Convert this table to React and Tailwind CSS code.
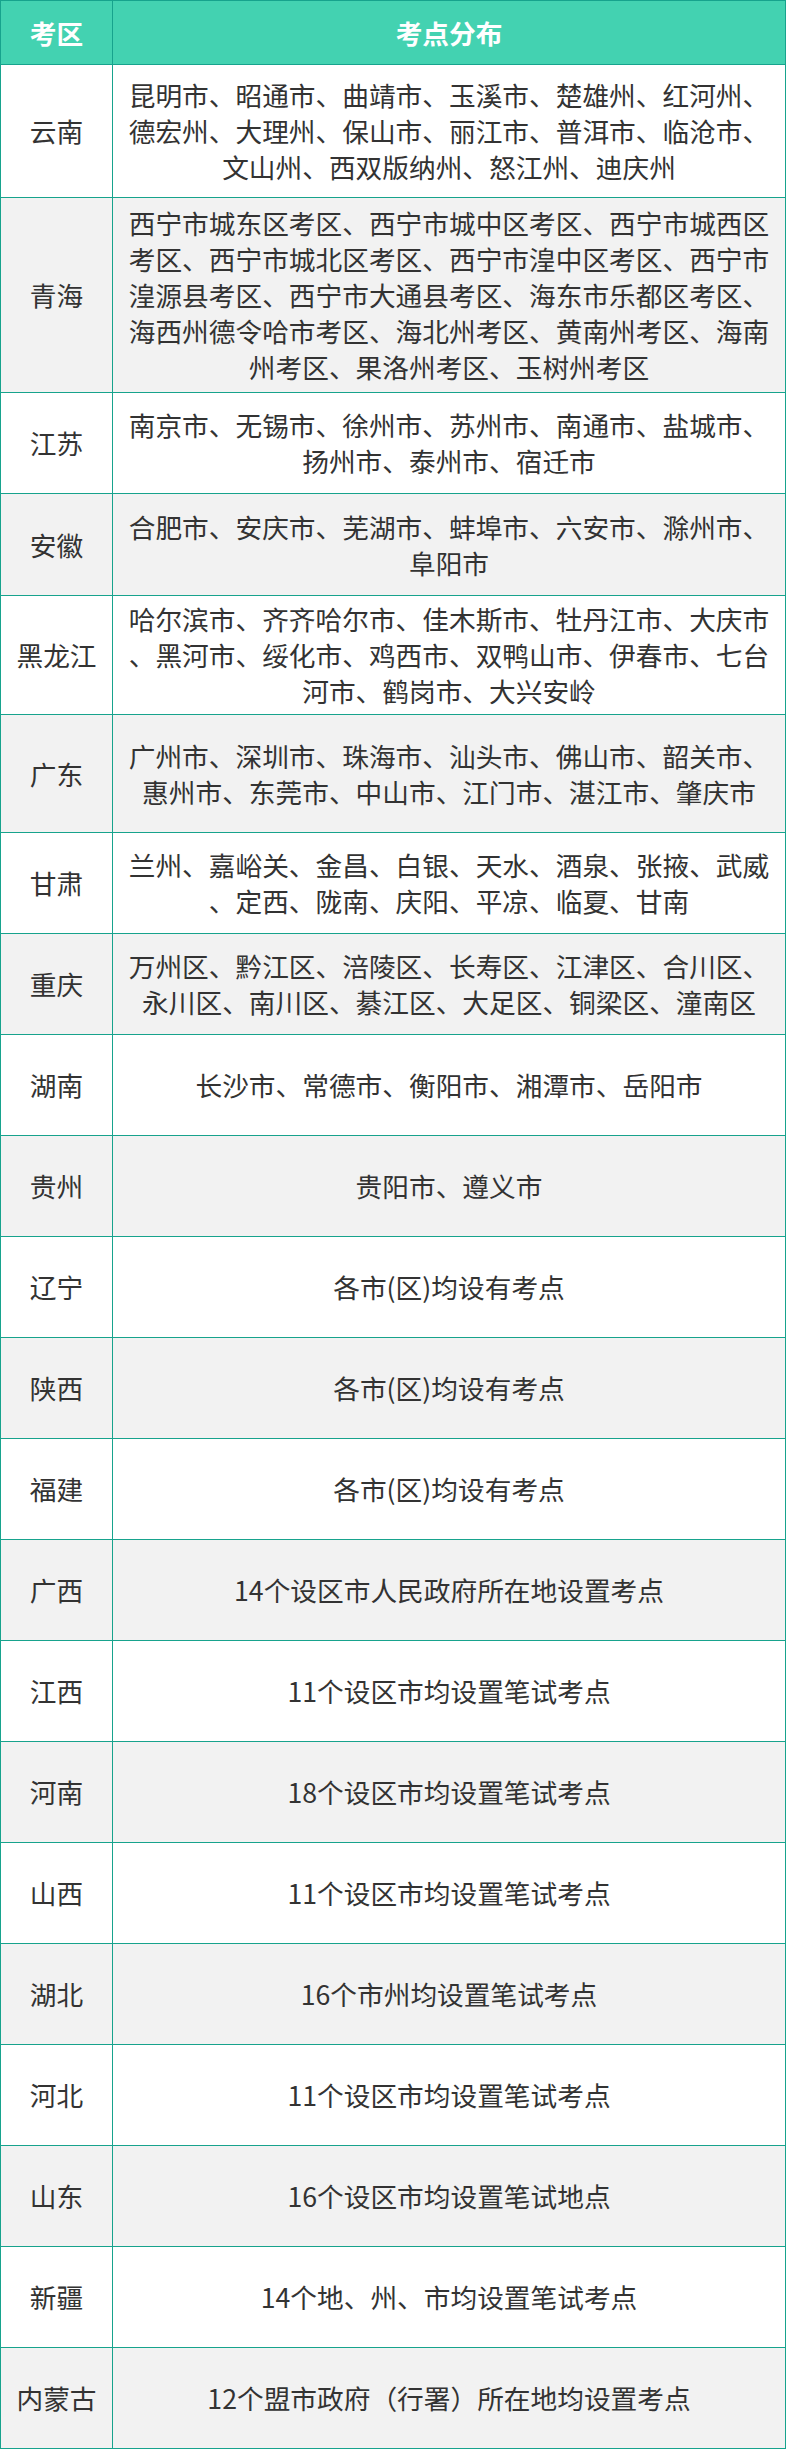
const rows = [
  {
    area: '云南',
    h: 'h-[133px]',
    lines: [
      '昆明市、昭通市、曲靖市、玉溪市、楚雄州、红河州、',
      '德宏州、大理州、保山市、丽江市、普洱市、临沧市、',
      '文山州、西双版纳州、怒江州、迪庆州',
    ],
  },
  {
    area: '青海',
    h: 'h-[195px]',
    lines: [
      '西宁市城东区考区、西宁市城中区考区、西宁市城西区',
      '考区、西宁市城北区考区、西宁市湟中区考区、西宁市',
      '湟源县考区、西宁市大通县考区、海东市乐都区考区、',
      '海西州德令哈市考区、海北州考区、黄南州考区、海南',
      '州考区、果洛州考区、玉树州考区',
    ],
  },
  {
    area: '江苏',
    h: 'h-[101px]',
    lines: ['南京市、无锡市、徐州市、苏州市、南通市、盐城市、', '扬州市、泰州市、宿迁市'],
  },
  {
    area: '安徽',
    h: 'h-[102px]',
    lines: ['合肥市、安庆市、芜湖市、蚌埠市、六安市、滁州市、', '阜阳市'],
  },
  {
    area: '黑龙江',
    h: 'h-[119px]',
    lines: [
      '哈尔滨市、齐齐哈尔市、佳木斯市、牡丹江市、大庆市',
      '、黑河市、绥化市、鸡西市、双鸭山市、伊春市、七台',
      '河市、鹤岗市、大兴安岭',
    ],
  },
  {
    area: '广东',
    h: 'h-[118px]',
    lines: ['广州市、深圳市、珠海市、汕头市、佛山市、韶关市、', '惠州市、东莞市、中山市、江门市、湛江市、肇庆市'],
  },
  {
    area: '甘肃',
    h: 'h-[101px]',
    lines: ['兰州、嘉峪关、金昌、白银、天水、酒泉、张掖、武威', '、定西、陇南、庆阳、平凉、临夏、甘南'],
  },
  {
    area: '重庆',
    h: 'h-[101px]',
    lines: ['万州区、黔江区、涪陵区、长寿区、江津区、合川区、', '永川区、南川区、綦江区、大足区、铜梁区、潼南区'],
  },
  { area: '湖南', h: 'h-[101px]', lines: ['长沙市、常德市、衡阳市、湘潭市、岳阳市'] },
  { area: '贵州', h: 'h-[101px]', lines: ['贵阳市、遵义市'] },
  { area: '辽宁', h: 'h-[101px]', lines: ['各市(区)均设有考点'] },
  { area: '陕西', h: 'h-[101px]', lines: ['各市(区)均设有考点'] },
  { area: '福建', h: 'h-[101px]', lines: ['各市(区)均设有考点'] },
  { area: '广西', h: 'h-[101px]', lines: ['14个设区市人民政府所在地设置考点'] },
  { area: '江西', h: 'h-[101px]', lines: ['11个设区市均设置笔试考点'] },
  { area: '河南', h: 'h-[101px]', lines: ['18个设区市均设置笔试考点'] },
  { area: '山西', h: 'h-[101px]', lines: ['11个设区市均设置笔试考点'] },
  { area: '湖北', h: 'h-[101px]', lines: ['16个市州均设置笔试考点'] },
  { area: '河北', h: 'h-[101px]', lines: ['11个设区市均设置笔试考点'] },
  { area: '山东', h: 'h-[101px]', lines: ['16个设区市均设置笔试地点'] },
  { area: '新疆', h: 'h-[101px]', lines: ['14个地、州、市均设置笔试考点'] },
  { area: '内蒙古', h: 'h-[101px]', lines: ['12个盟市政府（行署）所在地均设置考点'] },
]

// Exam-site table: left column is the province, right column lists the sites.
// Line breaks are fixed so the wrapping matches the source table exactly.
export default function App() {
  return (
    <div className="min-h-[2451px] w-[786px] bg-white font-['Noto_Sans_CJK_SC',sans-serif] text-[26.7px] leading-[36px] text-[#333]">
      <div className="border-x border-t border-[#17a38d]">
        {/* header */}
        <div className="flex h-[64px] border-b border-[#17a38d] bg-[#43d2b1] font-bold text-white">
          <div className="flex w-[112px] shrink-0 items-center justify-center border-r border-[#17a38d]">
            考区
          </div>
          <div className="flex flex-1 items-center justify-center">考点分布</div>
        </div>

        {rows.map((row, i) => (
          <div
            key={row.area}
            className={
              'flex border-b border-[#17a38d] ' +
              row.h +
              (i % 2 === 1 ? ' bg-[#f2f2f2]' : ' bg-white')
            }
          >
            <div className="flex w-[112px] shrink-0 items-center justify-center border-r border-[#17a38d] whitespace-nowrap">
              {row.area}
            </div>
            <div className="flex flex-1 flex-col items-center justify-center px-[12px]">
              {row.lines.map((line, j) => (
                <div key={j} className="whitespace-nowrap text-center">
                  {line}
                </div>
              ))}
            </div>
          </div>
        ))}
      </div>
    </div>
  )
}
